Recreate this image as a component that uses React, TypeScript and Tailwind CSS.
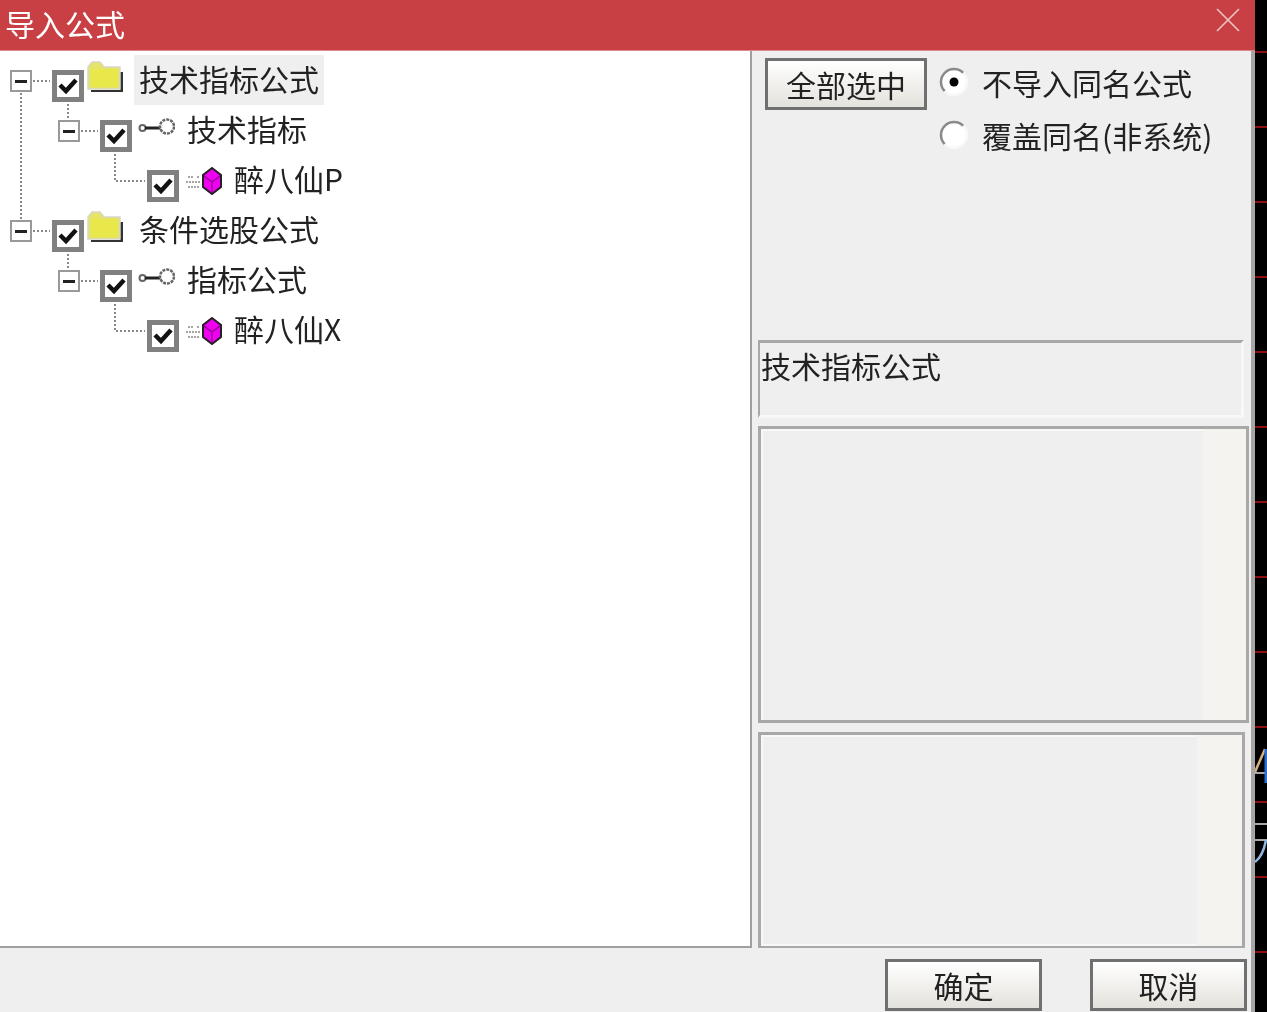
import React from "react";

const FONT = "font-['Noto_Sans_CJK_SC','Noto_Sans',sans-serif]";

function Expander() {
    return (
        <div className="flex items-center justify-center w-[22px] h-[22px] mt-[15px] mr-[20px] shrink-0 bg-white border-2 border-[#999999]">
            <div className="w-[12px] h-[3px] bg-[#222222]"></div>
        </div>
    );
}

function CheckBox() {
    return (
        <div className="flex items-center justify-center w-[32px] h-[32px] mt-[15px] shrink-0 bg-white border-[5px] border-[#808080]">
            <svg width="22" height="22" viewBox="0 0 22 22">
                <path d="M3 10 L9 16 L19 5" fill="none" stroke="#111111" strokeWidth="4.5" />
            </svg>
        </div>
    );
}

function FolderIcon() {
    return (
        <svg width="37" height="32" viewBox="0 0 37 32" className="mt-[6px] ml-[3px] shrink-0">
            <path d="M4 31 H36 V11 H33 V29 H4 Z" fill="#333333" />
            <path d="M1 28 V6 L5 1 H13 L17 6 H33 V28 Z" fill="#e6e36a" stroke="#d8d8c8" strokeWidth="1.5" />
            <rect x="4" y="8" width="27" height="18" fill="#e9e84a" />
        </svg>
    );
}

function KeyIcon() {
    return (
        <svg width="37" height="20" viewBox="0 0 37 20" className="mt-[12px] ml-[6px] shrink-0">
            <circle cx="4.5" cy="11" r="3" fill="#ffffff" stroke="#666666" strokeWidth="2" />
            <path d="M7 11 H23" stroke="#222222" strokeWidth="3" />
            <circle cx="29" cy="9.5" r="7" fill="#ffffff" stroke="#666666" strokeWidth="2.5" strokeDasharray="3 1" />
        </svg>
    );
}

function GemIcon() {
    return (
        <svg width="37" height="28" viewBox="0 0 37 28" className="mt-[12px] ml-[6px] shrink-0">
            <path d="M3 10 H9 M12 10 H15 M1 15 H15 M3 20 H15" stroke="#888888" strokeWidth="1.5" strokeDasharray="2 1" />
            <path d="M27 1 L36 8 V20 L27 27 L18 20 V8 Z" fill="#f000f0" stroke="#222222" strokeWidth="2" />
            <path d="M19 9 L27 15 L35 9 M27 15 V26" fill="none" stroke="#8a008a" strokeWidth="1.2" />
        </svg>
    );
}

function TreeRow({ indent, label, kind, selected }: { indent: string; label: string; kind: "folder" | "key" | "gem"; selected?: boolean }) {
    return (
        <div className={`flex h-[50px] ${indent}`}>
            {kind !== "gem" && <Expander />}
            <CheckBox />
            {kind === "folder" && <FolderIcon />}
            {kind === "key" && <KeyIcon />}
            {kind === "gem" && <GemIcon />}
            <div className={`h-[50px] px-[5px] text-[30px] leading-[47px] whitespace-nowrap text-[#222222] ${kind === "folder" ? "ml-[10px]" : "ml-[7px]"} ${selected ? "bg-[#efefef]" : ""}`}>
                {label}
            </div>
        </div>
    );
}

function TreeLines() {
    return (
        <svg width="160" height="300" viewBox="0 52 160 300" className="absolute left-0 top-0">
            <g stroke="#888888" strokeWidth="2" strokeDasharray="2 2" fill="none">
                <path d="M33 82 H50 M33 232 H50" />
                <path d="M21 94 V220" />
                <path d="M68 105 V121 M68 255 V271" />
                <path d="M81 132 H98 M81 282 H98" />
                <path d="M115 155 V182 H145 M115 305 V332 H145" />
            </g>
        </svg>
    );
}

function Radio({ checked }: { checked?: boolean }) {
    return (
        <svg width="30" height="30" viewBox="0 0 30 30" className="shrink-0">
            <circle cx="15" cy="15" r="13" fill="#ffffff" />
            <path d="M5.8 24.2 A13 13 0 0 1 24.2 5.8" fill="none" stroke="#8a8a8a" strokeWidth="2.5" />
            <path d="M24.2 5.8 A13 13 0 0 1 5.8 24.2" fill="none" stroke="#f8f8f8" strokeWidth="2.5" />
            {checked && <circle cx="15" cy="15" r="4.5" fill="#000000" />}
        </svg>
    );
}

function DialogButton({ label, width, height }: { label: string; width: string; height: string }) {
    return (
        <button className={`${width} ${height} border-[3px] border-[#707070] bg-gradient-to-b from-[#ffffff] to-[#e4e2dc] text-[30px] leading-none text-[#222222]`}>
            {label}
        </button>
    );
}

function ScreenEdge() {
    const ticks = [52, 127, 202, 277, 352, 427, 502, 577, 652, 727, 802, 877, 952];
    return (
        <svg width="12" height="1012" viewBox="0 0 12 1012" className="shrink-0">
            {ticks.map((y) => (
                <path key={y} d={`M0 ${y} H12`} stroke="#8c0f0f" strokeWidth="2" />
            ))}
            <path d="M0 773 H12 M0 824 H12 M0 840 H12" stroke="#a8a8a8" strokeWidth="2" />
            <path d="M0 772 L10 749" stroke="#d8b080" strokeWidth="2.5" fill="none" />
            <path d="M11 749 V783" stroke="#2a6fd0" strokeWidth="3" fill="none" />
            <path d="M0 862 Q8 856 11 840" stroke="#8fb8e0" strokeWidth="2.5" fill="none" />
        </svg>
    );
}

export default function App() {
    return (
        <div className={`flex w-[1267px] h-[1012px] overflow-hidden bg-black blur-[0.4px] ${FONT}`}>
            <div className="flex flex-col w-[1255px] shrink-0">
                <div className="flex items-center justify-between h-[51px] pl-[5px] pr-[15px] bg-[#c84044] border-b border-[#dc8a8c]">
                    <span className="text-[30px] leading-none text-white mb-[5px]">导入公式</span>
                    <svg width="24" height="24" viewBox="0 0 24 24" className="mb-[10px]">
                        <path d="M1 1 L23 23 M23 1 L1 23" stroke="#eec4c4" strokeWidth="1.6" />
                    </svg>
                </div>

                <div className="flex flex-col flex-1 bg-[#efefef] border-r-4 border-[#a6a6a6]">
                    <div className="flex h-[897px]">
                        <div className="relative w-[752px] pt-[4px] bg-white border-r-2 border-b-2 border-[#a0a0a0]">
                            <TreeLines />
                            <TreeRow indent="pl-[10px]" label="技术指标公式" kind="folder" selected />
                            <TreeRow indent="pl-[58px]" label="技术指标" kind="key" />
                            <TreeRow indent="pl-[147px]" label="醉八仙P" kind="gem" />
                            <TreeRow indent="pl-[10px]" label="条件选股公式" kind="folder" />
                            <TreeRow indent="pl-[58px]" label="指标公式" kind="key" />
                            <TreeRow indent="pl-[147px]" label="醉八仙X" kind="gem" />
                        </div>

                        <div className="flex flex-col flex-1 pl-[6px]">
                            <div className="flex h-[289px] pl-[7px] pt-[7px]">
                                <DialogButton label="全部选中" width="w-[162px]" height="h-[52px]" />
                                <div className="flex flex-col gap-[23px] ml-[12px] pt-[9px]">
                                    <div className="flex items-center gap-[13px] h-[30px]">
                                        <Radio checked />
                                        <span className="text-[30px] leading-none text-[#222222]">不导入同名公式</span>
                                    </div>
                                    <div className="flex items-center gap-[13px] h-[30px]">
                                        <Radio />
                                        <span className="text-[30px] leading-none whitespace-nowrap text-[#222222]">覆盖同名(非系统)</span>
                                    </div>
                                </div>
                            </div>

                            <div className="w-[486px] h-[78px] pl-[1px] border-t-[3px] border-l-2 border-r-[3px] border-b-[3px] border-t-[#a8a8a8] border-l-[#a8a8a8] border-r-[#f8f8f8] border-b-[#f8f8f8] text-[30px] leading-[44px] text-[#222222]">
                                技术指标公式
                            </div>

                            <div className="flex w-[491px] h-[297px] mt-[8px] border-[3px] border-[#a8a8a8]">
                                <div className="flex-1 border-t-2 border-l-2 border-[#f8f8f8]"></div>
                                <div className="w-[43px] bg-[#f4f3f0]"></div>
                            </div>

                            <div className="flex w-[487px] h-[216px] mt-[9px] border-[3px] border-b-2 border-[#a8a8a8]">
                                <div className="flex-1 border-t-2 border-l-2 border-b-2 border-[#f8f8f8]"></div>
                                <div className="w-[45px] bg-[#f4f3f0]"></div>
                            </div>
                        </div>
                    </div>

                    <div className="flex justify-end gap-[48px] pt-[11px] pr-[4px]">
                        <DialogButton label="确定" width="w-[157px]" height="h-[52px]" />
                        <DialogButton label="取消" width="w-[157px]" height="h-[52px]" />
                    </div>
                </div>
            </div>
            <ScreenEdge />
        </div>
    );
}
